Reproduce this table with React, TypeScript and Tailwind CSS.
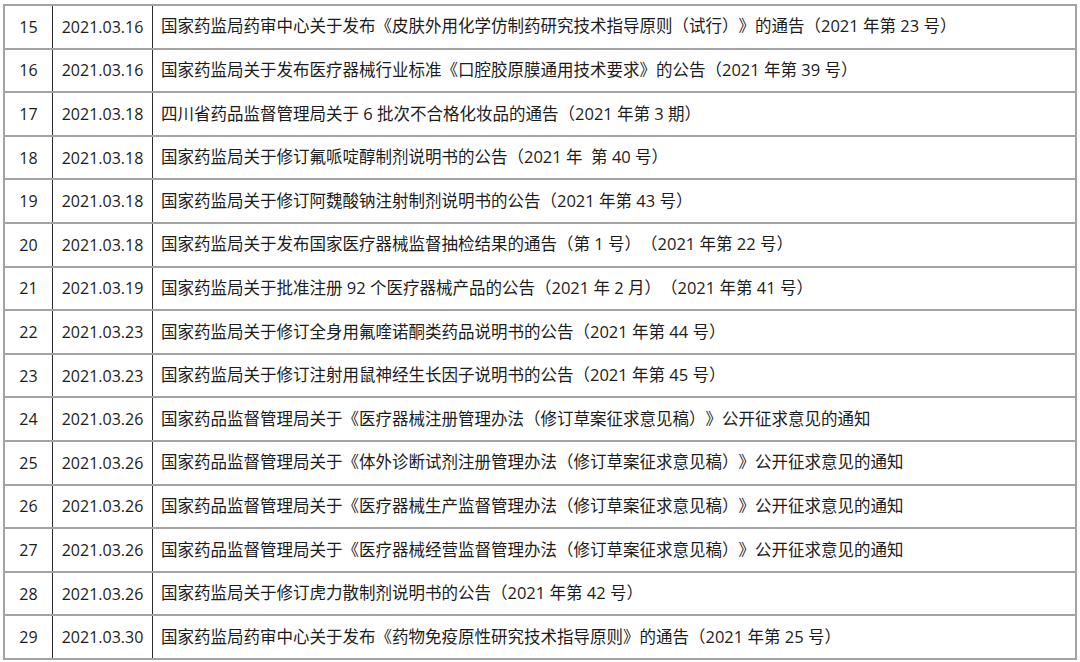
import React from "react";

const rows: [string, string, string][] = [
  ["15", "2021.03.16", "国家药监局药审中心关于发布《皮肤外用化学仿制药研究技术指导原则（试行）》的通告（2021 年第 23 号）"],
  ["16", "2021.03.16", "国家药监局关于发布医疗器械行业标准《口腔胶原膜通用技术要求》的公告（2021 年第 39 号）"],
  ["17", "2021.03.18", "四川省药品监督管理局关于 6 批次不合格化妆品的通告（2021 年第 3 期）"],
  ["18", "2021.03.18", "国家药监局关于修订氟哌啶醇制剂说明书的公告（2021 年  第 40 号）"],
  ["19", "2021.03.18", "国家药监局关于修订阿魏酸钠注射制剂说明书的公告（2021 年第 43 号）"],
  ["20", "2021.03.18", "国家药监局关于发布国家医疗器械监督抽检结果的通告（第 1 号）（2021 年第 22 号）"],
  ["21", "2021.03.19", "国家药监局关于批准注册 92 个医疗器械产品的公告（2021 年 2 月）（2021 年第 41 号）"],
  ["22", "2021.03.23", "国家药监局关于修订全身用氟喹诺酮类药品说明书的公告（2021 年第 44 号）"],
  ["23", "2021.03.23", "国家药监局关于修订注射用鼠神经生长因子说明书的公告（2021 年第 45 号）"],
  ["24", "2021.03.26", "国家药品监督管理局关于《医疗器械注册管理办法（修订草案征求意见稿）》公开征求意见的通知"],
  ["25", "2021.03.26", "国家药品监督管理局关于《体外诊断试剂注册管理办法（修订草案征求意见稿）》公开征求意见的通知"],
  ["26", "2021.03.26", "国家药品监督管理局关于《医疗器械生产监督管理办法（修订草案征求意见稿）》公开征求意见的通知"],
  ["27", "2021.03.26", "国家药品监督管理局关于《医疗器械经营监督管理办法（修订草案征求意见稿）》公开征求意见的通知"],
  ["28", "2021.03.26", "国家药监局关于修订虎力散制剂说明书的公告（2021 年第 42 号）"],
  ["29", "2021.03.30", "国家药监局药审中心关于发布《药物免疫原性研究技术指导原则》的通告（2021 年第 25 号）"],
];

export default function App() {
  return (
    <div
      className="w-[1080px] h-[662px] bg-white pt-[4px] pl-[3px]"
      style={{ fontFamily: '"Open Sans", "Noto Sans CJK SC", sans-serif' }}
    >
      <div className="w-[1074px] border-l-2 border-r-2 border-t-2 border-[#a3a3a3] text-[#1c1c1c] text-[16px]">
        {rows.map(([n, d, t]) => (
          <div key={n} className="flex h-[43.6px] border-b-2 border-[#a3a3a3]">
            <div className="w-[48px] shrink-0 flex items-center justify-center border-r border-[#2a2a2a]">
              {n}
            </div>
            <div className="w-[100px] shrink-0 flex items-center justify-center border-r border-[#2a2a2a]">
              {d}
            </div>
            <div className="flex-1 flex items-center pl-[8px] whitespace-pre text-[16.5px] [text-spacing-trim:space-all]">
              {t}
            </div>
          </div>
        ))}
      </div>
    </div>
  );
}
